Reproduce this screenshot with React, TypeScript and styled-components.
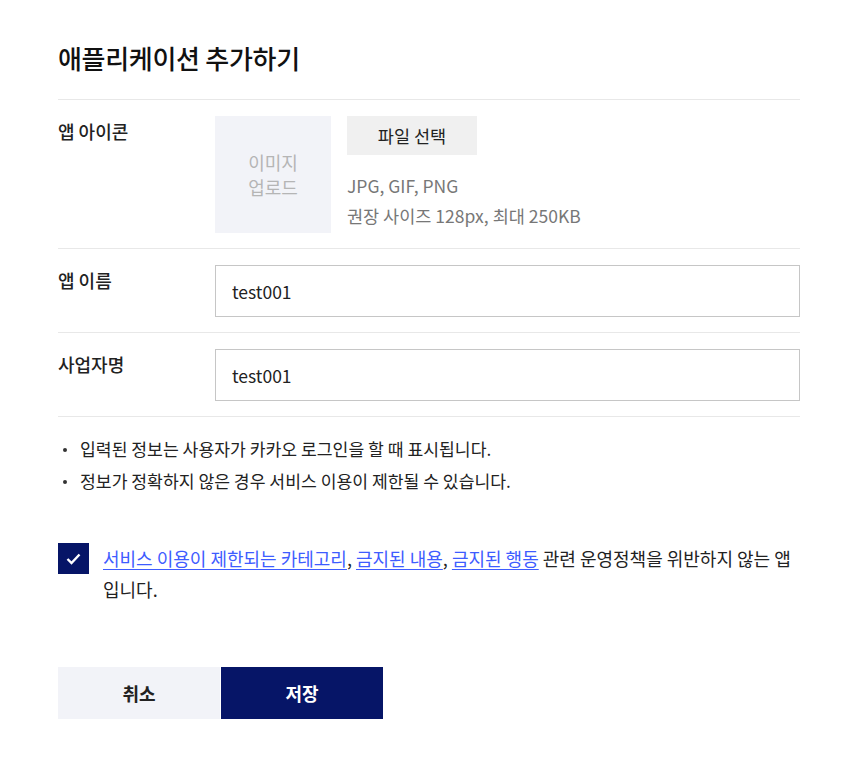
import styled, { createGlobalStyle } from 'styled-components';

const GlobalStyle = createGlobalStyle`
  body {
    margin: 0;
    background: #fff;
    font-family: 'Noto Sans CJK KR', 'Noto Sans', sans-serif;
    color: #222;
  }
`;

const Wrapper = styled.div`
  width: 742px;
  padding: 36px 0 0 58px;
`;

const Title = styled.h1`
  margin: 0;
  font-size: 26px;
  font-weight: 500;
  line-height: 44px;
  letter-spacing: -0.3px;
  color: #111;
  padding-bottom: 19px;
  border-bottom: 1px solid #e8e8e8;
`;

const Row = styled.div`
  display: flex;
  padding: 16px 0 15px;
  border-bottom: 1px solid #e8e8e8;
`;

const Label = styled.div`
  width: 157px;
  flex-shrink: 0;
  font-size: 18px;
  font-weight: 500;
  line-height: 30px;
  color: #222;
`;

const IconBox = styled.div`
  width: 116px;
  height: 117px;
  background: #f2f3f8;
  color: #b5b5b5;
  font-size: 18px;
  line-height: 25px;
  display: flex;
  align-items: center;
  justify-content: center;
  text-align: center;
`;

const IconInfo = styled.div`
  margin-left: 16px;
  display: flex;
  flex-direction: column;
`;

const FileButton = styled.button`
  width: 130px;
  height: 39px;
  border: none;
  background: #f0f0f0;
  font-family: inherit;
  font-size: 17.5px;
  color: #222;
  padding: 0;
  cursor: pointer;
`;

const Hint = styled.p`
  margin: 16px 0 0;
  font-size: 17.5px;
  line-height: 30px;
  color: #777;
`;

const Input = styled.input`
  flex: 1;
  height: 52px;
  box-sizing: border-box;
  border: 1px solid #c6c6c6;
  padding: 0 16px;
  font-family: inherit;
  font-size: 17.5px;
  color: #222;
  outline: none;
`;

const Notes = styled.ul`
  margin: 16px 0 0;
  padding: 0;
  list-style: none;
`;

const Note = styled.li`
  position: relative;
  padding-left: 22px;
  font-size: 17.2px;
  line-height: 32px;
  color: #222;
  &::before {
    content: '';
    position: absolute;
    left: 5px;
    top: 15px;
    width: 4px;
    height: 4px;
    border-radius: 50%;
    background: #333;
  }
`;

const Agree = styled.label`
  display: flex;
  align-items: flex-start;
  margin-top: 46px;
  gap: 14px;
`;

const Check = styled.span`
  width: 31px;
  height: 31px;
  flex-shrink: 0;
  background: #061567;
  display: flex;
  align-items: center;
  justify-content: center;
`;

const AgreeText = styled.span`
  font-size: 18px;
  line-height: 31px;
  color: #222;
`;

const Link = styled.a`
  color: #3e5cff;
  text-decoration: underline;
  text-underline-offset: 3px;
`;

const Buttons = styled.div`
  display: flex;
  margin-top: 62px;
`;

const ActionButton = styled.button<{ $primary?: boolean }>`
  width: 162px;
  height: 52px;
  border: none;
  font-family: inherit;
  font-size: 18px;
  font-weight: 700;
  background: ${(p) => (p.$primary ? '#061567' : '#f2f3f8')};
  color: ${(p) => (p.$primary ? '#fff' : '#222')};
  margin-left: ${(p) => (p.$primary ? '1px' : '0')};
  cursor: pointer;
`;

const App = () => {
  return (
    <>
      <GlobalStyle />
      <Wrapper>
        <Title>애플리케이션 추가하기</Title>
        <Row>
          <Label>앱 아이콘</Label>
          <IconBox>
            이미지
            <br />
            업로드
          </IconBox>
          <IconInfo>
            <FileButton>파일 선택</FileButton>
            <Hint>
              JPG, GIF, PNG
              <br />
              권장 사이즈 128px, 최대 250KB
            </Hint>
          </IconInfo>
        </Row>
        <Row>
          <Label>앱 이름</Label>
          <Input defaultValue="test001" />
        </Row>
        <Row>
          <Label>사업자명</Label>
          <Input defaultValue="test001" />
        </Row>
        <Notes>
          <Note>입력된 정보는 사용자가 카카오 로그인을 할 때 표시됩니다.</Note>
          <Note>정보가 정확하지 않은 경우 서비스 이용이 제한될 수 있습니다.</Note>
        </Notes>
        <Agree>
          <Check>
            <svg width="15" height="12" viewBox="0 0 15 12" fill="none">
              <path d="M1.5 6L5.5 10L13.5 1.5" stroke="#fff" strokeWidth="2.4" />
            </svg>
          </Check>
          <AgreeText>
            <Link href="#">서비스 이용이 제한되는 카테고리</Link>,{' '}
            <Link href="#">금지된 내용</Link>, <Link href="#">금지된 행동</Link> 관련
            운영정책을 위반하지 않는 앱입니다.
          </AgreeText>
        </Agree>
        <Buttons>
          <ActionButton>취소</ActionButton>
          <ActionButton $primary>저장</ActionButton>
        </Buttons>
      </Wrapper>
    </>
  );
};

export default App;
